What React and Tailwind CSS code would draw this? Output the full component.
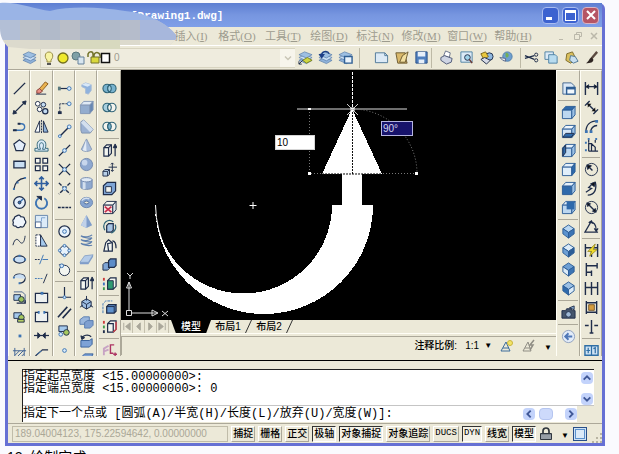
import React from 'react';

const NAVY = '#1f2d4a';
const BLUE = '#3c74b4';
const LIGHT = '#c3dbf2';

const Box = ({ top = '#e4f0fb', front = '#bcd7f0', side = '#9cc0e4', line = '#2c5d96' }) => (
  <g stroke={line} strokeLinejoin="round">
    <path d="M1.5 5.5 5 1.5h10l-3.500 4z" fill={top} />
    <path d="M1.500 5.500h10v9h-10z" fill={front} />
    <path d="M11.500 5.500 15 1.500v9l-3.500 4z" fill={side} />
  </g>
);

const Iso = ({ top = '#b7d6f2', left = '#5b93cf', right = '#3c74b4' }) => (
  <g stroke="#2c5d96" strokeLinejoin="round">
    <path d="m8 1 6 4-6 4-6-4z" fill={top} />
    <path d="m2 5 6 4v6l-6-4.500z" fill={left} />
    <path d="m14 5-6 4v6l6-4.500z" fill={right} />
  </g>
);

const Dot = ({ x, y, r = 1.5 }) => <circle cx={x} cy={y} r={r} fill="#d8eafa" stroke={BLUE} />;

const Sheets = () => (
  <g stroke="#5d81ae" strokeWidth="0.800">
    <path d="m1 11 6-3 8 3-6 3.500z" fill="#8fb2da" />
    <path d="m1 8 6-3 8 3-6 3.500z" fill="#c9def3" />
    <path d="m1 5 6-3 8 3-6 3.500z" fill="#9dbfe2" />
  </g>
);

const Rings = ({ a = 'none', b = 'none', mid = 'none' }) => (
  <g stroke="#2f6478" strokeWidth="1.200">
    <circle cx="5.500" cy="8" r="4.500" fill={a} />
    <circle cx="10.500" cy="8" r="4.500" fill={b} />
    <path d="M8 4.300a4.500 4.500 0 0 1 0 7.400 4.500 4.500 0 0 1 0-7.400z" fill={mid} />
  </g>
);

const icons = {
  // draw
  Line: <path d="M2 14 14 2" strokeWidth="1.500" />,
  'Construction line': <><path d="M2 14 14 2" strokeWidth="1.500" /><path d="m1 15 1-4 3 3zM15 1l-4 1 3 3z" fill={NAVY} /></>,
  Polyline: <><path d="M2 12h8a3.500 3.500 0 0 0 0-7H7" stroke={BLUE} strokeWidth="1.500" /><path d="M1 12h4M6 5h3" strokeWidth="2" /></>,
  Polygon: <path d="m8 2 6 4.500-2.300 7H4.300L2 6.500z" fill="#e4eefa" strokeWidth="1.300" />,
  Rectangle: <path d="M2 4.500h12v7H2z" fill="#c9def3" strokeWidth="1.400" />,
  Arc: <><path d="M2 14C3 7 7 3 14 2" strokeWidth="1.300" /><path d="M1 13h2v2H1zM5 6h2v2H5zM13 1h2v2h-2z" fill={BLUE} stroke="none" /></>,
  Circle: <><circle cx="8" cy="8" r="6.200" fill="#e4eefa" strokeWidth="1.400" /><path d="m8 8 4-4" stroke={BLUE} strokeWidth="1.500" /><circle cx="8" cy="8" r="1.500" fill={BLUE} /></>,
  'Revision cloud': <path d="M5 2q3-2 4.500 1 4-.5 4 3 2.500 2.500 0 5-1 4-4.500 2.500-3 2.500-5-.5-4 0-2.500-4-1.500-3 1-4Q2 3 5 2z" fill="#eef4fb" strokeWidth="1.300" />,
  Spline: <path d="M1 13C3 5 6 6 8 9s5 3 6-6" />,
  Ellipse: <><ellipse cx="8" cy="8" rx="6" ry="3.800" fill="#c9def3" strokeWidth="1.400" /><path d="M1 7h2v2H1zM13 7h2v2h-2zM7 3h2v2H7z" fill={BLUE} stroke="none" /></>,
  'Ellipse arc': <><path d="M2 7c1-5 12-5 12 1 0 3-3 5-6 5" strokeWidth="1.300" /><path d="M2 7c1-5 12-5 12 1H8z" fill="#c9def3" stroke="none" /><path d="M1 6h2v2H1zM7 12h2v2H7z" fill={BLUE} stroke="none" /></>,
  'Insert block': <><path d="M2 2h9l3 3v9" stroke="#48628c" /><path d="M2 5h7v6H2z" fill="#a5c9ec" /><circle cx="10" cy="10" r="3" fill="#9ac25a" /><path d="M5 14h9v-3" strokeWidth="1.500" /></>,
  'Make block': <><path d="M2 4h8v6H2z" fill="#a5c9ec" /><circle cx="10" cy="9" r="3" fill="#a6c85e" /><path d="M6 11h7v3H6z" fill="#b7cf66" /></>,
  Point: <path d="M7 7h3v3H7z" fill={BLUE} stroke="none" />,
  Hatch: <path d="M3 1v14M13 1v14M1 4h14M1 12h14M3 9l5-5M4 12l8-8M8 12l5-5" stroke="#3b5f92" />,
  // modify
  Erase: <><path d="M5 9 12 1l3 2-7 8z" fill="#eab34f" stroke="#8a5b1d" /><path d="m3 10 3-2 3 3-3 2H3z" fill="#e98f85" stroke="#8a4038" /><path d="M2 14h11" /></>,
  Copy: <><circle cx="4" cy="4" r="2.500" fill="#fff" /><circle cx="10" cy="5" r="2.500" fill={LIGHT} /><circle cx="6" cy="10" r="2.500" fill="#fff" /><circle cx="12" cy="12" r="2.800" fill={LIGHT} strokeWidth="1.300" /></>,
  Mirror: <><path d="M6 2v12H1z" fill="#f7fafd" /><path d="M10 2v12h5z" fill="#90b4dc" /><path d="M8 1v14" strokeDasharray="2 1" /></>,
  Offset: <><path d="M1 14V11h3C2 5 5 2 8 2s6 3 4 9h3v3z" fill="#dcebf8" stroke="#2f6478" /><path d="M4 12h3C5 8 6 5 8 5s3 3 1 7h3" stroke="#2f6478" /></>,
  Array: <path d="M1.500 1.500h5v5h-5zM9.500 1.500h5v5h-5zM1.500 9.500h5v5h-5zM9.500 9.500h5v5h-5z" fill="#f6f6f0" strokeWidth="1.300" />,
  Move: <path d="M8 1v14M1 8h14M5.500 3.500 8 1l2.500 2.500M5.500 12.500 8 15l2.500-2.500M3.500 5.500 1 8l2.500 2.500M12.500 5.500 15 8l-2.500 2.500" stroke="#2f5f9f" strokeWidth="1.700" />,
  Rotate: <><path d="M5 3.500a6 6 0 1 0 6 0" stroke={BLUE} strokeWidth="2" /><path d="M3 1.500h5v4z" fill={NAVY} /></>,
  Scale: <><path d="M1.500 1.500h13v13h-13z" fill="#dcebf8" stroke="#6586ad" /><path d="M1.500 8.500h6v6h-6z" fill="#fff" stroke="#48628c" /><path d="M8 8V4h4" stroke="#7da2cf" /></>,
  Stretch: <><path d="M2 2h5v12H2z" fill="#fff" strokeDasharray="2 1" /><path d="M7 2v12h7z" fill="#a5c9ec" /></>,
  Trim: <><path d="M1 8h5" strokeDasharray="2 1" /><path d="M9 8h6M10 3 6 13" stroke={BLUE} /></>,
  Extend: <><path d="M1 8h8" strokeDasharray="2 1" stroke={BLUE} /><path d="m14 3-4 10" /></>,
  'Break at point': <><path d="M1.500 3.500h13v10h-13z" fill="#eef1f0" strokeWidth="1.300" /><path d="M7 2h3v3H7z" fill={BLUE} stroke="none" /></>,
  Break: <><path d="M5 3.500H1.500v10h13v-10H11" fill="#eef1f0" strokeWidth="1.300" /><path d="M4 2h2v3H4zM10 2h2v3h-2z" fill={BLUE} stroke="none" /></>,
  Join: <><path d="M0 8h16" strokeWidth="1.300" /><path d="m4 5 3 3-3 3zM12 5 9 8l3 3z" fill={NAVY} /></>,
  Chamfer: <><path d="M2 15V9l7-6h6" strokeWidth="1.300" /><path d="m3 8 5-4" stroke={BLUE} /></>,
  // snap
  'Temporary track point': <><path d="M2 8h9" strokeWidth="1.300" /><path d="M1 6h3v4H1z" fill="#5b7a7f" stroke="none" /><Dot x={13} y={8} r={2} /></>,
  'Snap from': <><path d="M3 14V4h8" strokeDasharray="3 1" /><path d="M1 12h4v3H1z" fill={NAVY} stroke="none" /><Dot x={13} y={4} r={2} /></>,
  Endpoint: <><path d="M3 13 12 4" strokeWidth="1.500" /><Dot x={3} y={13} /><Dot x={13} y={3} r={2} /></>,
  Midpoint: <><path d="M2 14 14 2" strokeWidth="1.500" /><Dot x={8} y={8} r={2} /></>,
  Intersection: <><path d="m2 2 12 12M14 2 2 14" strokeWidth="1.500" /><Dot x={8} y={8} r={2} /></>,
  'Apparent intersection': <><path d="m2 2 12 12M14 2 2 14" strokeWidth="1.500" strokeDasharray="4 1.500" /><Dot x={8} y={8} r={2} /></>,
  Extension: <path d="M1 8h14" strokeWidth="1.500" strokeDasharray="3 1" />,
  Center: <><circle cx="8" cy="8" r="6" fill="#e8f2fb" strokeWidth="1.300" /><Dot x={8} y={8} r={2} /></>,
  Quadrant: <><circle cx="8" cy="8" r="5" fill="#e8f2fb" /><Dot x={8} y={3} /><Dot x={8} y={13} /><Dot x={3} y={8} /><Dot x={13} y={8} /></>,
  Tangent: <><circle cx="8" cy="9" r="5.500" fill="#f3f5f0" /><path d="M2 3h5" /><Dot x={5} y={4} r={2} /></>,
  Perpendicular: <><path d="M8 1v11M1 12h14" strokeWidth="1.300" /><Dot x={8} y={12} /></>,
  Parallel: <path d="M1 13 11 2M6 14 15 4" strokeWidth="1.700" />,
  Insertion: <><path d="M2 2h9v6H2z" fill="#a5c9ec" /><circle cx="10" cy="9" r="3" fill="#a6c85e" /><Dot x={4} y={11} r={2} /></>,
  Node: <Dot x={8} y={8} r={2} />,
  // solids
  Polysolid: <><path d="m3 4 4-2 6 2v6l-3 4-3-1V8L3 6z" fill="#8fb2dd" stroke="#a9bcd5" /><path d="m3 4 4-2 6 2-4 2z" fill="#d9e8f7" stroke="none" /></>,
  'Solid box': <Box top="#dfe9f5" front="#93acce" side="#6787b3" line="#8398b8" />,
  Wedge: <><path d="M2 12V3l3-2 10 10-3 4H3z" fill="#9bb1d2" stroke="#7e91af" /><path d="m5 1 10 10-3 3L2 4z" fill="#d3dfee" stroke="none" /></>,
  Cone: <><path d="m8 1 5.500 11c-1 3-10 3-11 0z" fill="#a9bddb" stroke="#8296b5" /><path d="M7.500 2 4 13l4 1z" fill="#e4ecf6" stroke="none" /></>,
  Sphere: <><circle cx="8" cy="8" r="6.500" fill="#8ea8d0" stroke="#7289ae" /><circle cx="6" cy="6" r="3" fill="#c7d6ec" stroke="none" /></>,
  Cylinder: <><path d="M2 4v8c0 3 12 3 12 0V4z" fill="#8fa9cf" stroke="#7289ae" /><path d="M4 5h3v9H4z" fill="#d3dfee" stroke="none" /><ellipse cx="8" cy="4" rx="6" ry="2.300" fill="#dfe9f5" stroke="#7289ae" /></>,
  Torus: <><ellipse cx="8" cy="8" rx="6.500" ry="5.500" fill="#86a4d0" stroke="#6d87b0" /><ellipse cx="8" cy="8" rx="2.500" ry="1.500" fill="#ece9d8" stroke="#49689a" /><path d="M3 6c2-3 6-3 8-2" stroke="#d3dfee" strokeWidth="1.500" /></>,
  Pyramid: <><path d="m8 1 6 11-6 3-6-3z" fill="#7f9dca" stroke="none" /><path d="M8 1 2 12l6 3z" fill="#c0d1e9" stroke="none" /></>,
  Helix: <path d="M2 3c4 2 10 1 12-1M2 3c2 2 8 3 12 2M2 7c4 2 10 1 12-2M2 7c2 2 8 3 12 2M2 11c4 2 10 1 12-2M2 11c2 2 8 3 12 2" stroke="#5d7fae" strokeWidth="1.200" />,
  'Planar surface': <><path d="M1 11 6 4l9-1-5 8z" fill="#b4cbe8" stroke="#8ea6c8" /><path d="M1 11v2h9v-2zM10 13l5-8V3l-5 8z" fill="#7f9dca" stroke="none" /></>,
  Extrude: <><path d="m2 5 3-3h5v9l-3 3H2z" fill="#f3f5f0" strokeWidth="1.300" /><path d="M2 5h5v9M7 5l3-3M14 14V4" strokeWidth="1.300" /><path d="m12 5 2-4 2 4z" fill={NAVY} /></>,
  Presspull: <><path d="m8 4 5 3v5l-5 3-5-3V7z" fill="#9bbce2" /><path d="m3 7 5 3 5-3M8 10v5M8 6V1M1 13l3-2M15 13l-3-2" /></>,
  Sweep: <><path d="m1 6 4-3h6v5l-3 3H1z" fill="#9ab6dc" stroke="#5a7db0" /><path d="m6 9 3-2h6v5l-3 3H6z" fill="#7f9fd0" stroke="#5a7db0" /></>,
  Revolve: <><path d="M2 8h9l3-2v6l-3 3H2z" fill="#7da2d6" stroke="#355f9a" /><path d="M3 6c1-4 7-5 10-2" strokeWidth="1.300" /><path d="m2 3 1 4 3-2z" fill={NAVY} /></>,
  Loft: <path d="m3 5 3-3h9l-3 6v6H2z" fill="#7da2d6" stroke="#355f9a" />,
  // solid editing
  Union: <Rings a="#79b3cf" b="#79b3cf" mid="#a9d3e4" />,
  Subtract: <Rings a="#a9cfdf" b="#f4f4ee" mid="#f4f4ee" />,
  Intersect: <Rings a="#f4f4ee" b="#f4f4ee" mid="#79b3cf" />,
  'Move faces': <><path d="m1 10 2-2h5v5l-2 2H1z" fill="#b7cfe8" /><path d="M1 10h5v5M6 10l2-2" /><path d="M11 1v9M7 5.500h9M9.500 2.500 11 1l1.500 1.500M9.500 8.500 11 10l1.500-1.500" /></>,
  'Offset faces': <><path d="m1.500 5 4-3.500h9v9l-4 4h-9z" fill="#7fa5d6" strokeWidth="1.300" /><path d="M4 6h6v6H4z" fill="#f3f5f0" /></>,
  'Delete faces': <><Box top="#f3f5f0" front="#f8e4e0" side="#dfe5ea" line={NAVY} /><path d="m3 7 7 6M10 7l-7 6" stroke="#c62d4b" strokeWidth="1.700" /></>,
  'Rotate faces': <><path d="m5 7 2-2h5v7l-2 2H5z" fill="#a8c5e4" strokeWidth="1.300" /><path d="M3 12C-1 4 7-1 12 3M14 6c2 4-1 8-4 9" stroke="#2f6478" strokeWidth="1.300" /></>,
  'Taper faces': <><path d="m2 14 2-9 3-3 4 3v9z" fill="#f3f5f0" strokeWidth="1.300" /><path d="m7 14-1-8 5-1M11 3c3 0 4 3 4 8" strokeWidth="1.300" /></>,
  'Copy faces': <><path d="m1 8 2-2h5v6l-2 2H1z" fill="#7fa5d6" /><path d="m7 4 2-2h6v7l-2 2H7z" fill="#5d8cc8" strokeWidth="1.300" /></>,
  'Color faces': <><path d="M1 2h2v3H1z" fill="#cc3b3b" stroke="none" /><path d="M1 7h2v3H1z" fill="#3f74c0" stroke="none" /><path d="M1 12h2v3H1z" fill="#3c9a4a" stroke="none" /><path d="m6 5 3-3h6v9l-3 3H6z" fill="#f3f5f0" strokeWidth="1.300" /><path d="M6 5h6v9H6z" fill="#2f9a72" /></>,
  'Copy edges': <><path d="m5 7 2-2h8v7l-2 2H5z" fill="#5f91cc" strokeWidth="1.300" /><path d="M5 7h8v7M13 7l2-2" /><path d="M1 14V4l3-3h7" stroke={BLUE} strokeDasharray="3 1" /></>,
  'Color edges': <><path d="M1 2h2v3H1z" fill="#cc3b3b" stroke="none" /><path d="M1 7h2v3H1z" fill="#3c9a4a" stroke="none" /><path d="M1 12h2v3H1z" fill={NAVY} stroke="none" /><path d="m6 5 3-3h6v9l-3 3H6zM6 5h6v9" fill="#f3f5f0" strokeWidth="1.300" /><path d="m12 14 3-3V3" stroke="#d2434c" strokeWidth="1.500" /></>,
  Imprint: <><path d="M2 13V6l5-3M2 9l5-2" stroke="#c7a3c4" strokeWidth="2" /><path d="M13 2H9v9h3M12 12h4M14 10v4" stroke="#ad3563" strokeWidth="1.500" /></>,
  // views
  'Named views': <><path d="M2 2h9l3 3v9H2z" fill="#dbe9f7" stroke="#41658f" /><path d="M6 7h9v7H6z" fill="#f2f8fd" stroke="#2f5f94" strokeWidth="1.500" /><path d="M6 8h9" stroke="#2f5f94" strokeWidth="2" /></>,
  'Top view': <Box top="#2f6aab" />,
  'Bottom view': <><Box top="#f1f7fc" front="#d5e6f6" /><path d="m2 14 3-4h9l-3 4z" fill="#2f6aab" /></>,
  'Left view': <><Box /><path d="m2 6 3-4v8l-3 4z" fill="#2f6aab" /></>,
  'Right view': <Box side="#2f6aab" front="#e0eefa" />,
  'Front view': <Box front="#2f6aab" />,
  'Back view': <><Box /><path d="M6 2h8v8H6z" fill="#2f6aab" stroke="none" /></>,
  'SW isometric': <Iso />,
  'SE isometric': <Iso top="#dcebf8" left="#6d9fd4" right="#2c5d96" />,
  'NE isometric': <Iso top="#6d9fd4" left="#dcebf8" right="#3c74b4" />,
  'NW isometric': <Iso top="#9cc0e4" left="#2f6aab" right="#dcebf8" />,
  Camera: <><path d="M1 6h4l1-2h5l1 2h3v8H1z" fill="#46566d" /><circle cx="8" cy="10" r="3" fill="#9fb9d6" /><path d="m9 3 5-2v4z" fill="#8fb2da" /></>,
  'Previous view': <><circle cx="8" cy="8" r="6.500" fill="#e3ecf8" stroke="#8d9fbf" /><path d="M12 8H5M8 4.500 4.500 8 8 11.500" stroke="#5078b8" strokeWidth="2" /></>,
  // dimensions
  Linear: <><path d="M1.500 1v14M14.500 1v14M2 6h12" strokeWidth="1.500" /><path d="m2 6 3-2v4zM14 6l-3-2v4z" fill="#111" /></>,
  Aligned: <><path d="m4 4 8 8M1 6l5-5M10 15l5-5" strokeWidth="1.500" /><path d="M4 4h4L4 8zM12 12V8l-4 4z" fill="#111" stroke="none" /></>,
  'Arc length': <><path d="M2 14C2 6 7 2 14 2M7 14c0-4 3-7 7-7" strokeWidth="1.500" /><path d="M1 12h3v3H1zM12 1h3v3h-3zM6 12h3v3H6z" fill={BLUE} stroke="none" /></>,
  Ordinate: <><path d="M5 14V6h3v8M8 6l4 4v4M5 14h10M5 2v3M12 2v3" strokeWidth="1.300" /><path d="M1 5h2M1 13h2M4 1h2M12 1h2" stroke={BLUE} strokeWidth="2" /></>,
  Radius: <><circle cx="8" cy="8" r="6.500" /><path d="m4 4 5 5" strokeWidth="1.500" /><path d="m3 3 5 1-4 4z" fill="#111" /></>,
  Jogged: <><path d="M4 15C11 15 14 9 12 1M2 12l6-4-3-1 5-5" strokeWidth="1.400" /><path d="m7 3 5-2-1 5z" fill="#111" /></>,
  Diameter: <><circle cx="8" cy="8" r="6.500" /><path d="m4 4 8 8" strokeWidth="1.500" /><path d="m3 3 4 1-3 3zM13 13l-4-1 3-3z" fill="#111" /></>,
  Angular: <path d="M15 14H1L8 2M6 3c5 0 7 4 7 9M5 4l3-2 1 3M11 10l2 3 2-3" strokeWidth="1.300" />,
  'Quick dimension': <><path d="M1.500 1v14M8 6v9M14.500 1v14M2 5h12" strokeWidth="1.500" /><path d="m12 1-8 8h4l-2 5 8-7h-4z" fill="#f1dc2c" stroke="#8e801a" strokeWidth="0.800" /></>,
  Baseline: <path d="M2.500 1v14M14 1v6M8 9v6M3 4h11M3 11h5" strokeWidth="1.500" />,
  Continue: <path d="M1.500 1v14M8 1v14M14.500 1v14M2 7h12" strokeWidth="1.500" />,
  'Dimension space': <><path d="M2.500 1v14M13.500 1v14M3 3h10M3 13h10" strokeWidth="1.500" /><path d="M5 5h6v6H5z" fill="#d79e3d" stroke="#77592b" /></>,
  'Dimension break': <path d="M8 1v14M1 7h4M11 7h4M6 15h4" strokeWidth="1.500" />,
  Tolerance: <><path d="M1 3h14v10H1z" fill="#cfe3f4" stroke="#2f6fa5" strokeWidth="1.500" /><path d="M8 3v10M4.500 5v6M2.500 8h4M10 6l2-1v6" stroke="#2f6fa5" strokeWidth="1.300" /></>,
  // standard
  Layers: <Sheets />,
  'Layer match': <><Sheets /><path d="m5 11 5-3 5 3-6 3z" fill="#cfd640" stroke="#7e8520" /><path d="m1 15 4-4M1 12v3h3" /></>,
  'Layer previous': <><Sheets /><path d="M4 7c-1-6 6-7 8-3M4 8 2 5h4z" stroke="#1d3f86" strokeWidth="1.500" /></>,
  'Layer states': <><Sheets /><path d="M7 7h8v7H7z" fill="#eaf3fb" stroke="#2f5f94" strokeWidth="1.500" /></>,
  New: <><path d="M1.500 3h10l3 3v7.500h-13z" fill="#dceaf6" stroke="#4e7797" /><path d="M11.500 3v3h3" stroke="#4e7797" /></>,
  Open: <><path d="M2 3h10v4l2 7H4z" fill="#d9b86a" stroke="#6b5a31" /><path d="m6 13 3-7 6-4-3 11z" fill="#f2dfa0" stroke="#6b5a31" /></>,
  Save: <><path d="M2 2h12v12H2z" fill="#4f7fbe" stroke="#294f88" /><path d="M4 2h8v5H4zM5 10h6v4H5z" fill="#e6eff9" stroke="none" /></>,
  Print: <><path d="m5 6 2-5 5 2-1 5z" fill="#fff" stroke="#68718a" /><path d="m2 8 4-2 8 3-1 4-5 2-6-4z" fill="#cfd5e4" stroke="#4d5875" /></>,
  'Plot preview': <><path d="M2 2h12v11H2z" fill="#dceaf6" stroke="#4f82a4" /><circle cx="9" cy="8" r="3" fill="#9fd1e8" /><path d="m11 10 3 4" stroke="#6b3a34" strokeWidth="1.700" /></>,
  Publish: <><circle cx="11" cy="7" r="4" fill="#8fb7df" /><path d="m2 4 5-2 3 5-5 3z" fill="#e9c73d" stroke="#7d6615" /><path d="m2 10 4-2 6 3-4 4z" fill="#d6dae6" /></>,
  '3D DWF': <><circle cx="9" cy="7" r="5" fill="#6d9fd0" stroke="#517fab" /><path d="M7 3c3 0 4 2 3 4s-3 1-3-1z" fill="#73ae57" stroke="none" /><path d="m1 8 6 1v3l-3-1z" fill="#e3e6ef" stroke="#5b6987" /></>,
  Cut: <><path d="m1 6 10 4M1 9l10-3" strokeWidth="1.300" /><circle cx="13" cy="5" r="1.700" /><circle cx="13" cy="11" r="1.700" /></>,
  'Copy clip': <><path d="M1 2h9v8H1z" fill="#dceaf6" stroke="#4f82a4" /><path d="M5 5h7l2 2v7H5z" fill="#b8dcf0" stroke="#4f82a4" /></>,
  Paste: <><path d="m3 4 6-2 4 8-6 4-5-3z" fill="#d9bf5d" stroke="#7d6b2a" /><path d="m7 6 5 1 3 5-5 2-4-3z" fill="#c8dff0" stroke="#4f7797" /></>,
  'Match properties': <><path d="M14 2 8 9" strokeWidth="2.500" stroke="#5b4a40" /><path d="M8 8c-3 1-2 4-6 6 5 0 8-1 8-4z" fill="#2f2623" stroke="none" /></>,
};

const drawTools = ['Line', 'Construction line', 'Polyline', 'Polygon', 'Rectangle', 'Arc', 'Circle', 'Revision cloud', 'Spline', 'Ellipse', 'Ellipse arc', 'Insert block', 'Make block', 'Point', 'Hatch'];
const modifyTools = ['Erase', 'Copy', 'Mirror', 'Offset', 'Array', 'Move', 'Rotate', 'Scale', 'Stretch', 'Trim', 'Extend', 'Break at point', 'Break', 'Join', 'Chamfer'];
const snapTools = ['Temporary track point', 'Snap from', '|', 'Endpoint', 'Midpoint', 'Intersection', 'Apparent intersection', 'Extension', '|', 'Center', 'Quadrant', 'Tangent', '|', 'Perpendicular', 'Parallel', 'Insertion', 'Node'];
const solidTools = ['Polysolid', 'Solid box', 'Wedge', 'Cone', 'Sphere', 'Cylinder', 'Torus', 'Pyramid', 'Helix', 'Planar surface', '|', 'Extrude', 'Presspull', 'Sweep', 'Revolve', 'Loft'];
const editTools = ['Union', 'Subtract', 'Intersect', '|', 'Extrude', 'Move faces', 'Offset faces', 'Delete faces', 'Rotate faces', 'Taper faces', 'Copy faces', 'Color faces', '|', 'Copy edges', 'Color edges', '|', 'Imprint'];
const viewTools = ['Named views', '|', 'Top view', 'Bottom view', 'Left view', 'Right view', 'Front view', 'Back view', '|', 'SW isometric', 'SE isometric', 'NE isometric', 'NW isometric', '|', 'Camera', '|', 'Previous view'];
const dimensionTools = ['Linear', 'Aligned', 'Arc length', 'Ordinate', '|', 'Radius', 'Jogged', 'Diameter', 'Angular', '|', 'Quick dimension', 'Baseline', 'Continue', 'Dimension space', 'Dimension break', '|', 'Tolerance'];

const menus = [
  ['插入', 'I'],
  ['格式', 'O'],
  ['工具', 'T'],
  ['绘图', 'D'],
  ['标注', 'N'],
  ['修改', 'M'],
  ['窗口', 'W'],
  ['帮助', 'H'],
];

const modes = [
  ['捕捉', false],
  ['栅格', false],
  ['正交', false],
  ['极轴', true],
  ['对象捕捉', true],
  ['对象追踪', false],
  ['DUCS', false],
  ['DYN', true],
  ['线宽', false],
  ['模型', true],
];

const Icon = ({ name }) => (
  <svg viewBox="0 0 16 16" className="size-[15px] shrink-0" fill="none" stroke={NAVY} aria-hidden="true">
    {icons[name]}
  </svg>
);

const Palette = ({ label, items, className = 'w-[22px]' }) => (
  <div
    role="toolbar"
    aria-label={label}
    className={`h-[286px] shrink-0 overflow-hidden border-t border-r border-l border-t-[#fffef6] border-r-[#aca899] border-l-[#fffef6] pt-2 ${className}`}
  >
    {items.map((name, index) =>
      name === '|' ? (
        <hr key={index} className="mx-px my-[2px] border-[#aca899]" />
      ) : (
        <button key={index} type="button" aria-label={name} className="flex h-[19px] w-full items-center justify-center">
          <Icon name={name} />
        </button>
      )
    )}
  </div>
);

const ToolGroup = ({ label, items }) => (
  <div role="toolbar" aria-label={label} className="flex shrink-0 items-center">
    {items.map((name) => (
      <button key={name} type="button" aria-label={name} className="flex h-5 w-5 items-center justify-center">
        <Icon name={name} />
      </button>
    ))}
  </div>
);

const Divider = () => <div className="h-5 w-px shrink-0 bg-[#bdb9a6]" />;

const Chevron = ({ d }) => (
  <svg viewBox="0 0 12 12" className="size-[10px]" fill="none" stroke="#3f5796" strokeWidth="2.200">
    <path d={d} />
  </svg>
);

const ScrollButton = ({ label, d }) => (
  <button type="button" aria-label={label} className="flex size-3 shrink-0 items-center justify-center rounded-sm bg-[#c3d3fb]">
    <Chevron d={d} />
  </button>
);

const TitleBar = () => (
  <header className="flex h-6 items-center bg-gradient-to-b from-[#5d7ed2] via-[#7796e0] to-[#7f9fe8] pr-[3px]">
    <h1 className="flex-1 pt-[3px] pl-[123px] font-['Liberation_Mono',monospace] text-[11px] font-bold text-white">[Drawing1.dwg]</h1>
    <div className="flex gap-[3px]">
      <button type="button" aria-label="Minimize" className="flex size-[17px] items-end rounded-sm border border-[#a9bcf0] bg-[#3c62d0] p-[3px]">
        <span className="h-[3px] w-[6px] bg-white" />
      </button>
      <button type="button" aria-label="Maximize" className="size-[17px] rounded-sm border border-[#a9bcf0] bg-[#3c62d0] p-[2px]">
        <span className="block size-full border border-t-[3px] border-white" />
      </button>
      <button type="button" aria-label="Close" className="flex size-[17px] items-center justify-center rounded-sm border border-[#d9b4c4] bg-[#b55565]">
        <svg viewBox="0 0 12 12" className="size-3" stroke="#fff" strokeWidth="2">
          <path d="m2 2 8 8M10 2l-8 8" />
        </svg>
      </button>
    </div>
  </header>
);

const MenuBar = () => (
  <nav className="flex h-[19px] items-center border-b border-white pl-[160px] font-['Liberation_Serif','Noto_Sans_CJK_SC',serif] text-[11px] leading-none text-[#9d9b8e]">
    {menus.map(([text, key]) => (
      <button key={key} type="button" className="w-[46px] shrink-0 whitespace-nowrap">
        {text}(<u>{key}</u>)
      </button>
    ))}
    <div className="ml-auto flex items-center gap-2 pr-1">
      <button type="button" aria-label="Minimize drawing" className="flex h-2 w-[7px] items-end">
        <span className="h-px w-1 bg-[#bbb8aa]" />
      </button>
      <button type="button" aria-label="Restore drawing">
        <svg viewBox="0 0 8 8" className="size-2" fill="none" stroke="#bbb8aa"><path d="M2.500 2V.5h5v4H6M.5 2.500h5v5h-5z" /></svg>
      </button>
      <button type="button" aria-label="Close drawing">
        <svg viewBox="0 0 8 8" className="size-2" stroke="#bbb8aa" strokeWidth="1.500"><path d="m1 1 6 6M7 1 1 7" /></svg>
      </button>
    </div>
  </nav>
);

const LayerBox = () => (
  <div className="flex h-5 min-w-0 flex-1 items-center border-y border-l border-[#d8d4c0] bg-[#efecde]">
    <svg viewBox="0 0 72 16" className="ml-px h-4 w-[72px] shrink-0" fill="none" aria-hidden="true">
      <path d="M5 10c-3-3-2-8 2-8s5 5 2 8v2H5z" fill="#f7f3a3" stroke="#9a8d45" />
      <path d="M5 14h4" stroke="#555" strokeWidth="2" />
      <circle cx="21" cy="8" r="5" fill="#efe92c" stroke="#74701f" strokeWidth="1.300" />
      <circle cx="34" cy="6" r="4" fill="#7fa0a6" stroke="#59777d" />
      <path d="M36 7h6v7h-6z" fill="#d8e6f0" stroke="#668199" />
      <path d="M46 7V4c1-3 5-3 5 0v3M52 7V5c1-4 7-3 6 3" stroke="#73732a" strokeWidth="1.500" />
      <path d="M49 7h8v6h-8z" fill="#d9d83c" stroke="#73732a" />
      <path d="M59.500 3.500h8v9h-8z" fill="#fff" stroke="#111" strokeWidth="1.500" />
    </svg>
    <select aria-label="Layer" disabled className="min-w-0 flex-1 appearance-none bg-transparent font-['Liberation_Sans',sans-serif] text-[10px] text-[#9d9b8e]">
      <option>0</option>
    </select>
    <span className="flex h-full w-[15px] shrink-0 items-center justify-center bg-[#f7f5ec]">
      <svg viewBox="0 0 8 8" className="size-2" fill="none" stroke="#c9c6b7" strokeWidth="1.500"><path d="m1 2.500 3 3 3-3" /></svg>
    </span>
  </div>
);

const ToolRow = () => (
  <div className="flex h-6 items-center border-b border-[#aca899] pr-px">
    <div className="flex w-8 shrink-0 justify-end pr-[3px]">
      <Icon name="Layers" />
    </div>
    <LayerBox />
    <ToolGroup label="Layers" items={['Layer match', 'Layer previous', 'Layer states']} />
    <div className="w-1 shrink-0" />
    <Divider />
    <div className="w-[11px] shrink-0" />
    <ToolGroup label="File" items={['New', 'Open', 'Save']} />
    <Divider />
    <div className="w-1 shrink-0" />
    <ToolGroup label="Plot" items={['Print', 'Plot preview', 'Publish', '3D DWF']} />
    <div className="w-1 shrink-0" />
    <Divider />
    <ToolGroup label="Clipboard" items={['Cut', 'Copy clip', 'Paste', 'Match properties']} />
  </div>
);

const DrawingArea = () => (
  <div className="relative h-[250px] overflow-hidden bg-black">
    <svg viewBox="0 0 434 250" preserveAspectRatio="xMinYMin" className="h-[250px] w-full" fill="none">
      <path d="m231 39-30 65h20v31h-10A88 88 0 0 1 34 135a109 109 0 0 0 218 0h-11v-31h20z" fill="#fff" shapeRendering="crispEdges" />
      <path d="M34.500 135a109 109 0 0 0 12 48" stroke="#fff" />
      <path d="M176 39h110" stroke="#ddd" />
      <path d="M231.500 2v37" stroke="#fff" strokeDasharray="3 1" />
      <path d="M231.500 42v62" stroke="#111" strokeDasharray="2 1" />
      <path d="M201 104h60" stroke="#111" strokeDasharray="2 1" />
      <path d="M188.500 39v64.500H296C296 68 267 39 231 39" stroke="#777" strokeDasharray="1 2" />
      <path d="m226 34 11 11M237 34l-11 11" stroke="#ccc" />
      <path d="M230 38h3v3h-3z" stroke="#fff" />
      <path d="M187 38h3v2h-3zM187 102h3v3h-3zM294 102h3v3h-3z" fill="#fff" />
      <path d="M128.500 135.500h7M132 132v7" stroke="#fff" />
      <g stroke="#ddd">
        <path d="M5.500 240.500h5v5h-5zM8 240v-28M11 243h25M5.500 218l2.500-6 2.500 6zM31 240l6 3-6 3z" />
        <path d="m6 203 3 3 3-3M9 206v3M41 241l6 5M47 241l-6 5" />
      </g>
    </svg>
    <input
      aria-label="Distance"
      defaultValue="10"
      className="absolute top-[65px] left-[154px] h-[15px] w-10 border border-[#d5d5d5] bg-white pl-px font-['Liberation_Sans',sans-serif] text-[10px] text-black"
    />
    <input
      aria-label="Angle"
      defaultValue="90°"
      className="absolute top-[51px] left-[260px] h-[15px] w-8 border border-[#b5b5e0] bg-[#17136b] pl-px font-['Liberation_Sans',sans-serif] text-[10px] text-[#d5d5f0]"
    />
  </div>
);

const Slash = () => (
  <svg viewBox="0 0 7 13" className="h-[13px] w-[7px] shrink-0" stroke="#333"><path d="M6.500 0 .5 13" /></svg>
);

const LayoutTabs = () => (
  <div className="flex h-[14px] items-center border-b border-[#fffef6] text-[10px] leading-none font-medium">
    {['M3 2v8M10 2 5 6l5 4z', 'M8 2 4 6l4 4z', 'm4 2 4 4-4 4z', 'M9 2v8M2 2l5 4-5 4z'].map((d, index) => (
      <button key={index} type="button" aria-label={['First', 'Previous', 'Next', 'Last'][index]} className="h-full w-3 border-r border-[#c5c1ae]">
        <svg viewBox="0 0 12 12" className="size-[11px]" fill="#aaa79a" stroke="#aaa79a"><path d={d} /></svg>
      </button>
    ))}
    <div role="tablist" aria-label="Layouts" className="flex h-full items-center">
      <button type="button" role="tab" aria-selected="true" className="ml-[2px] h-full w-10 bg-black text-white [clip-path:polygon(0_0,100%_0,88%_100%,12%_100%)]">
        模型
      </button>
      <button type="button" role="tab" aria-selected="false" className="w-[34px] text-center">布局1</button>
      <Slash />
      <button type="button" role="tab" aria-selected="false" className="w-[34px] text-center">布局2</button>
      <Slash />
    </div>
  </div>
);

const AnnotationBar = () => (
  <div className="mt-[2px] flex h-[19px] items-center justify-end border-t border-l border-[#aca899] bg-[#ece9d8] pr-1 text-[10px] leading-none font-medium">
    <label htmlFor="annotation-scale" className="mr-2">注释比例:</label>
    <select id="annotation-scale" className="w-[18px] appearance-none">
      <option>1:1</option>
    </select>
    <span className="ml-px text-[8px]">▼</span>
    <button type="button" aria-label="Annotation visibility" className="ml-2">
      <svg viewBox="0 0 14 14" className="size-[14px]" fill="none" stroke="#3c6c9c"><path d="m1 12 5-9 4 9zM3 9h6" /><circle cx="10" cy="4" r="2.500" fill="#f3e468" stroke="#c9b43c" /></svg>
    </button>
    <button type="button" aria-label="Add scales automatically" className="ml-2">
      <svg viewBox="0 0 14 14" className="size-[14px]" fill="none" stroke="#8f8d84"><path d="m1 12 5-9 3 9zM3 9h5" /><path d="M12 1 8 6h3l-3 5" strokeWidth="1.500" /></svg>
    </button>
    <button type="button" aria-label="Status menu" className="ml-2 pt-1 text-[8px]">▼</button>
  </div>
);

const CommandPanel = () => (
  <section aria-label="Command line" className="mt-1 border-t border-black pt-2 pr-2 pl-[14px]">
    <div className="border-t border-l border-[#222] bg-white font-['Liberation_Mono','Noto_Sans_CJK_SC',monospace] text-[12px] text-black">
      <div className="flex h-9 justify-between border-b border-[#c5c5c5] pr-px">
        <div className="pt-px leading-3 whitespace-pre">
          <p>指定起点宽度 &lt;15.00000000&gt;:</p>
          <p>指定端点宽度 &lt;15.00000000&gt;: 0</p>
        </div>
        <div className="flex flex-col justify-between pt-[2px]">
          <ScrollButton label="Scroll up" d="m2 8 4-4 4 4" />
          <ScrollButton label="Scroll down" d="m2 4 4 4 4-4" />
        </div>
      </div>
      <div className="flex h-4 items-center">
        <label htmlFor="command" className="leading-4 whitespace-pre">
          指定下一个点或 [圆弧(A)/半宽(H)/长度(L)/放弃(U)/宽度(W)]:
        </label>
        <input id="command" className="min-w-0 flex-1 pl-1 outline-none" />
        <ScrollButton label="Scroll left" d="M8 2 4 6l4 4" />
        <span className="mx-1 h-3 w-[14px] rounded-sm border border-[#b5c5f0] bg-[#cddafb]" />
        <span className="w-2" />
        <ScrollButton label="Scroll right" d="m4 2 4 4-4 4" />
        <span className="h-full w-[17px] bg-[#ece9d8]" />
      </div>
    </div>
  </section>
);

const StatusBar = () => (
  <footer className="mt-px flex h-5 items-center gap-[3px] border-t border-[#aca899] pl-1 text-[10px] leading-none">
    <output className="flex h-4 min-w-0 flex-1 items-center border border-[#c0bca9] pl-[2px] font-['Liberation_Sans',sans-serif] whitespace-nowrap text-[#aaa797]">
      189.04004123, 175.22594642, 0.00000000
    </output>
    {modes.map(([text, on]) => (
      <button
        key={text}
        type="button"
        aria-pressed={on}
        className={`flex h-4 shrink-0 items-center border px-px font-medium ${text.startsWith('D') ? "font-['Liberation_Mono',monospace] text-[9px]" : ''} ${
          on ? 'border-t-[#333] border-r-white border-b-white border-l-[#333] bg-[#f3f1e6]' : 'border-t-white border-r-[#aca899] border-b-[#aca899] border-l-white'
        }`}
      >
        {text}
      </button>
    ))}
    <button type="button" aria-label="Lock toolbars">
      <svg viewBox="0 0 14 14" className="size-[14px]" fill="none" stroke="#30363e"><path d="M4 7V4c0-4 6-4 6 0v3" strokeWidth="1.700" /><path d="M1.500 6.500h11v6h-11z" fill="#7a828c" /><path d="M2 9h10M2 11h10" stroke="#b2b8bf" /></svg>
    </button>
    <button type="button" aria-label="Tray settings" className="ml-[5px] pt-1 text-[8px]">▼</button>
    <button type="button" aria-label="Clean screen" className="ml-px size-[14px] shrink-0 border border-[#294f88] bg-[#cfe2f5] p-px">
      <span className="block size-full border border-[#5c92cd] bg-[#dcebf9]" />
    </button>
    <svg viewBox="0 0 10 10" className="ml-[2px] size-[10px] shrink-0 self-end" fill="#b8b4a2"><path d="M8 0h2v2H8zM4 4h2v2H4zM8 4h2v2H8zM0 8h2v2H0zM4 8h2v2H4zM8 8h2v2H8z" /></svg>
  </footer>
);

const Smudge = () => (
  <svg viewBox="0 0 180 56" className="absolute top-0 left-0 h-14 w-[180px]" aria-hidden="true">
    <defs>
      <clipPath id="smudge">
        <path d="M0 3c15-2 35 6 50 8 20-5 50-4 75 0 22 2 42 12 51 24v4l-6 6h-50v4H30L8 47C3 42 0 36 0 28z" />
      </clipPath>
    </defs>
    <g clipPath="url(#smudge)">
      <path d="M0 0h180v20H0z" fill="#9ab4e6" />
      <path d="M0 20h180v20H0z" fill="#b3bfd6" />
      <path d="M0 40h180v16H0z" fill="#dcdacd" />
      <path d="M20 20h20v20H20z" fill="#bbc0c8" />
      <path d="M40 20h20v20H40zM100 20h20v20h-20z" fill="#b1bac9" />
      <path d="M60 20h20v20H60z" fill="#b9bec8" />
      <path d="M80 20h20v20H80z" fill="#a9b4c8" />
      <path d="M120 20h20v20h-20z" fill="#b5bccb" />
      <path d="M140 20h40v20h-40z" fill="#a7b7dc" />
      <path d="M60 40h60v16H60z" fill="#d8d9bf" />
      <path d="M140 40h40v16h-40z" fill="#e9e6d8" />
    </g>
  </svg>
);

export default function App() {
  return (
    <div className="relative h-screen overflow-hidden bg-[#fafafe] pt-[3px] pr-[14px] pl-[5px] font-['Liberation_Sans','Noto_Sans_CJK_SC',sans-serif] text-black">
      <main className="rounded-t-md border-x-[3px] border-b-[3px] border-[#6670d4] bg-[#ece9d8]">
        <TitleBar />
        <MenuBar />
        <ToolRow />
        <div className="flex">
          <Palette label="Draw" items={drawTools} />
          <Palette label="Modify" items={modifyTools} className="w-[23px]" />
          <Palette label="Object snap" items={snapTools} />
          <Palette label="Modeling" items={solidTools} />
          <Palette label="Solid editing" items={editTools} className="w-6" />
          <div className="min-w-0 flex-1">
            <DrawingArea />
            <LayoutTabs />
            <AnnotationBar />
          </div>
          <Palette label="View" items={viewTools} className="w-6" />
          <Palette label="Dimension" items={dimensionTools} />
        </div>
        <CommandPanel />
        <StatusBar />
      </main>
      <p className="pt-[3px] pl-[2px] text-[14px] leading-4">12&nbsp; 绘制完成</p>
      <Smudge />
    </div>
  );
}
